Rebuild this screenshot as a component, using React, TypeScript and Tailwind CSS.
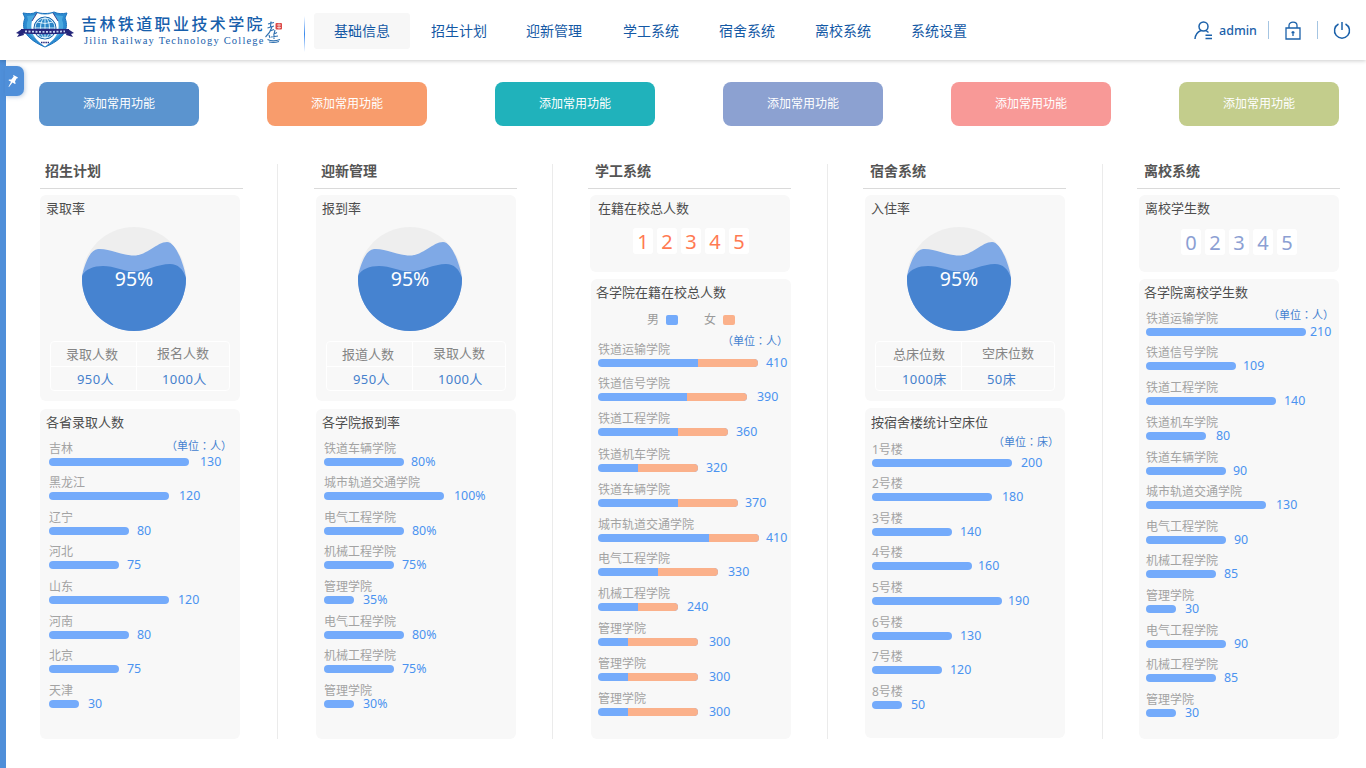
import React from "react";

type Row = { label: string; value: string; w: number; gap: number; h: number; blue?: number };

const rows = (list: [string, string, number, number, number, number?][], left: number, last = 34): Row[] =>
  list.map(([label, value, w, x, top, blue], i) => ({
    label,
    value,
    w,
    gap: x - left - w,
    h: i + 1 < list.length ? list[i + 1][4] - top : last,
    blue,
  }));

const provinces = rows([
  ["吉林", "130", 140, 200, 458], ["黑龙江", "120", 120, 179, 492], ["辽宁", "80", 80, 137, 527],
  ["河北", "75", 70, 127, 561], ["山东", "120", 120, 178, 596], ["河南", "80", 80, 137, 631],
  ["北京", "75", 70, 127, 665], ["天津", "30", 30, 88, 700],
], 49);

const arrivals = rows([
  ["铁道车辆学院", "80%", 80, 411, 458], ["城市轨道交通学院", "100%", 120, 454, 492], ["电气工程学院", "80%", 80, 412, 527],
  ["机械工程学院", "75%", 70, 402, 561], ["管理学院", "35%", 30, 363, 596], ["电气工程学院", "80%", 80, 412, 631],
  ["机械工程学院", "75%", 70, 402, 665], ["管理学院", "30%", 30, 363, 700],
], 324);

const students = rows([
  ["铁道运输学院", "410", 160, 766, 359, 100], ["铁道信号学院", "390", 149, 757, 393, 89], ["铁道工程学院", "360", 130, 736, 428, 80],
  ["铁道机车学院", "320", 100, 706, 464, 40], ["铁道车辆学院", "370", 140, 745, 499, 80], ["城市轨道交通学院", "410", 161, 766, 534, 111],
  ["电气工程学院", "330", 120, 728, 568, 60], ["机械工程学院", "240", 80, 687, 603, 40], ["管理学院", "300", 100, 709, 638, 30],
  ["管理学院", "300", 100, 709, 673, 30], ["管理学院", "300", 100, 709, 708, 30],
], 598, 30);

const buildings = rows([
  ["1号楼", "200", 140, 1021, 459], ["2号楼", "180", 120, 1002, 493], ["3号楼", "140", 80, 960, 528],
  ["4号楼", "160", 100, 978, 562], ["5号楼", "190", 130, 1008, 597], ["6号楼", "130", 80, 960, 632],
  ["7号楼", "120", 70, 950, 666], ["8号楼", "50", 30, 911, 701],
], 872);

const leavers = rows([
  ["铁道运输学院", "210", 160, 1310, 328], ["铁道信号学院", "109", 90, 1243, 362], ["铁道工程学院", "140", 130, 1284, 397],
  ["铁道机车学院", "80", 60, 1216, 432], ["铁道车辆学院", "90", 80, 1233, 467], ["城市轨道交通学院", "130", 120, 1276, 501],
  ["电气工程学院", "90", 80, 1234, 536], ["机械工程学院", "85", 70, 1224, 570], ["管理学院", "30", 30, 1185, 605],
  ["电气工程学院", "90", 80, 1234, 640], ["机械工程学院", "85", 70, 1224, 674], ["管理学院", "30", 30, 1185, 709],
], 1146, 30);

const navItems = ["基础信息", "招生计划", "迎新管理", "学工系统", "宿舍系统", "离校系统", "系统设置"];
const quick = ["bg-[#5b94cf]", "bg-[#f89c6c]", "bg-[#20b2bb]", "bg-[#8ca1d1]", "bg-[#f89997]", "bg-[#c3cd8c]"];

function Bars({ data }: { data: Row[] }) {
  return (
    <div className="flex flex-col">
      {data.map((r, i) => (
        <div key={i} style={{ height: r.h }}>
          <div className="h-4 text-[12px] leading-[18px] text-[#a3a3a3]">{r.label}</div>
          <div className="flex h-3 items-center whitespace-nowrap">
            <div className="flex h-2 shrink-0 overflow-hidden rounded-full bg-[#74abfb]" style={{ width: r.w }}>
              {r.blue !== undefined && <div className="h-2 flex-1 bg-[#fbb18b]" style={{ marginLeft: r.blue }} />}
            </div>
            <span className="text-[12.4px] leading-3 text-[#4b93f0]" style={{ marginLeft: r.gap }}>{r.value}</span>
          </div>
        </div>
      ))}
    </div>
  );
}

function Unit({ unit, className }: { unit: string; className: string }) {
  return (
    <span className={`absolute whitespace-nowrap font-['Noto_Sans_CJK_TC',sans-serif] text-[11px] leading-[14px] text-[#4381d0] ${className}`}>
      （单位：{unit}）
    </span>
  );
}

function Wave() {
  return (
    <svg className="mx-auto block" width="104" height="104" viewBox="0 0 104 104">
      <defs>
        <clipPath id="disc"><circle cx="52" cy="52" r="52" /></clipPath>
      </defs>
      <g clipPath="url(#disc)">
        <rect width="104" height="104" fill="#eeeeee" />
        <path d="M0 48C4 34 8 23 16 22C26 21 40 28.500 52 28.500C65 28.500 75 15 85 15C94 15 102 38 104 50V104H0Z" fill="#7fa9e6" />
        <path d="M0 49C3 42 12 39 21 39C32 39 42 44.500 52 44.500C63 44.500 76 37 88 37C96 37 101 42 104 51V104H0Z" fill="#4683d0" />
      </g>
      <text x="52" y="59" textAnchor="middle" fontSize="19.500" fill="#fff">95%</text>
    </svg>
  );
}

function RateCard({ title, cells, values, wide }: { title: string; cells: [string, string]; values: [string, string]; wide?: boolean }) {
  return (
    <section className="h-[206px] w-[200px] rounded-md bg-[#f8f8f8] pt-[3px]">
      <h3 className="mb-[9px] pl-[6px] text-[13px] leading-5 text-[#4d4d4d]">{title}</h3>
      <div className="pr-3"><Wave /></div>
      <div className="ml-[10px] mt-[10px] grid h-[50px] w-[180px] grid-cols-[86px_1fr] grid-rows-[25px_1fr] overflow-hidden rounded-[4px] border border-white text-[13px] leading-6">
        <div className={`border-b border-r border-white text-[#858585] ${wide ? "pl-[17px]" : "pl-[15px]"}`}>{cells[0]}</div>
        <div className="border-b border-white pl-5 leading-[23px] text-[#858585]">{cells[1]}</div>
        <div className="border-r border-white pl-[26px] tracking-[0.4px] text-[#4580cc]">{values[0]}</div>
        <div className="pl-[25px] tracking-[0.4px] text-[#4580cc]">{values[1]}</div>
      </div>
    </section>
  );
}

function CountCard({ title, digits, color, offset }: { title: string; digits: string; color: string; offset: string }) {
  return (
    <section className="h-[77px] w-[200px] rounded-md bg-[#f8f8f8] pt-[3px]">
      <h3 className={`${offset} text-[13px] leading-5 text-[#4d4d4d]`}>{title}</h3>
      <div className={`flex gap-1 ${color}`}>
        {digits.split("").map((d, i) => (
          <span key={i} className="h-[26px] w-5 rounded-[3px] bg-white text-center text-[20px] leading-[27px]">{d}</span>
        ))}
      </div>
    </section>
  );
}

function Title({ children, className }: { children: React.ReactNode; className: string }) {
  return <h2 className={`mb-[6px] h-[25px] w-[203px] border-b border-[#dadada] text-[14px] font-bold leading-[13px] text-[#555] ${className}`}>{children}</h2>;
}

function Crest() {
  return (
    <svg width="60" height="38" viewBox="0 0 60 38">
      <path d="M8 2C14 3 18 3 21 1C26 3 34 3 39 1C43 3 47 3 52 2L50 7C55 19 47 29 30 36C13 29 5 19 10 7Z" fill="#2c8bd0" stroke="#1b72bd" />
      <path d="M12 5C16 5 19 4 21 4L22 9C17 13 17 23 21 28C12 23 10 15 13 9Z" fill="#49a8df" />
      <path d="M48 5C44 5 41 4 39 4L38 9C43 13 43 23 39 28C48 23 50 15 47 9Z" fill="#49a8df" />
      <path d="M22 2L17 10C14 23 22 30 30 35.500C38 30 46 23 43 10L38 2Q30 5 22 2Z" fill="#fff" />
      <path d="M22 2L17 10M38 2L43 10" stroke="#25267b" strokeWidth=".8" />
      <circle cx="30" cy="17" r="11" fill="#2b86c8" stroke="#1763a9" />
      <g fill="none" stroke="#e7f7ff" strokeWidth=".9">
        <circle cx="30" cy="17" r="10" />
        <ellipse cx="30" cy="17" rx="4.500" ry="10" />
        <path d="M30 7V27M20 17H40M22 11Q30 14 38 11M22 24Q30 20 38 24" />
      </g>
      <path d="M6 18Q30 17.500 54 18L54 22.500Q30 24 6 22.500Z" fill="#25267b" />
      <path d="M7 18L1 22L4 23L2 26L9 24ZM53 18L59 22L56 23L58 26L51 24Z" fill="#25267b" />
      <path d="M10 20.300Q30 21.500 50 20.300" fill="none" stroke="#c9d5f3" strokeWidth="1.800" strokeDasharray="2 1.500" />
      <path d="M26 31.500H34" stroke="#25267b" strokeWidth="1.500" strokeDasharray="1.500 .7" />
    </svg>
  );
}

export default function App() {
  return (
    <div className="flex h-[768px] w-[1366px] flex-col overflow-hidden bg-white font-['Noto_Sans','Noto_Sans_CJK_SC',sans-serif]">
      <header className="relative z-10 flex h-[60px] shrink-0 bg-white shadow-[0_1px_4px_rgba(0,0,0,0.2)]">
        <div className="flex w-[304px] pl-[15px] pt-[11px]">
          <Crest />
          <div className="ml-[6px] mt-[3px] w-[183px] shrink-0 whitespace-nowrap text-[#1860ac]">
            <div className="h-[21px] text-[16px] font-medium leading-[21px] tracking-[2.4px]">吉林铁道职业技术学院</div>
            <div className="ml-[3px] font-['Liberation_Serif',serif] text-[10.5px] leading-[12px] tracking-[1.18px]">Jilin Railway Technology College</div>
          </div>
          <svg className="mt-[8px] shrink-0" width="19" height="25" viewBox="0 0 19 25" fill="none" stroke="#2f70b0" strokeWidth="1.100">
            <path d="M4 5L10 3.500M7 2.500L6.500 8M3.500 9L10 7M8 8Q6 14 1.500 18M6 12L10 10.500M11 11L10 15L13 13.500M5 16L6 19M10 15V20M7 18L14 17M3.500 20.500Q9 23 16 20.500M5 23Q10 24 15 22.500" />
            <rect x="11.500" y="4" width="6.500" height="6.500" rx="1" fill="#dc4a48" stroke="none" />
            <path d="M13 6H17M13 8.500H17M15 4.500V10" stroke="#fff" strokeWidth=".6" />
          </svg>
        </div>
        <div className="mt-4 h-9 w-px bg-gradient-to-b from-white via-[#3689ec] to-white" />
        <nav className="ml-[9px] mt-[13px] flex h-9">
          {navItems.map((n, i) => (
            <a key={n} className={`w-24 rounded-[3px] text-center text-[14px] leading-9 text-[#1459a5] ${i === 0 ? "bg-[#f7f7f7]" : i === 2 ? "" : "pl-[2px]"}`}>{n}</a>
          ))}
        </nav>
        <div className="ml-auto flex items-center pr-[15px] text-[#1b61aa]">
          <svg width="19" height="19" viewBox="0 0 19 19" fill="none" stroke="currentColor" strokeWidth="1.500">
            <circle cx="9.500" cy="5.500" r="4.500" />
            <path d="M1 18C1.300 13.500 3.500 11 7 9.500M12 9.500L14.500 11.500M11.500 14.200H18M11.500 17.500H18" />
          </svg>
          <span className="ml-[6px] mt-[3px] w-[37px] text-[12.5px] font-medium">admin</span>
          <i className="ml-3 h-[18px] w-px bg-[#a5c5e2]" />
          <svg className="ml-4" width="16" height="19" viewBox="0 0 16 19" fill="none" stroke="currentColor" strokeWidth="1.300">
            <path d="M1 7H15V18H1ZM4 7V4.500C4 0 12 0 12 4.500V7M8 10V15M6.500 11.500H9.500" />
          </svg>
          <i className="ml-4 h-[18px] w-px bg-[#a5c5e2]" />
          <svg className="ml-[15px]" width="18" height="19" viewBox="0 0 18 19" fill="none" stroke="currentColor" strokeWidth="1.500">
            <path d="M5.500 3A7.500 7.500 0 1 0 12.500 3M9 1V9" />
          </svg>
        </div>
      </header>
      <div className="flex min-h-0 flex-1">
        <aside className="relative w-[6px] shrink-0 bg-[#4f8fd9]">
          <div className="absolute left-[5px] top-[6px] flex h-[30px] w-[19px] items-center rounded-r-[7px] bg-[#4f8fd9] pl-[3px] shadow-[1px_1px_4px_rgba(60,110,170,0.35)]">
            <svg width="10" height="12" viewBox="0 0 10 12" fill="#fff">
              <path d="M5.500 0L10 2.500L9.200 3.500L8.500 3.400L7 6.500L7.700 8.500L7 9L4.500 7.600L1 12L.5 11.700L3 6.800L.5 5.300L1 4.600L3.300 4.500L5.700 1.500L5.100.8Z" />
            </svg>
          </div>
        </aside>
        <main className="min-w-0 flex-1">
          <div className="ml-[33px] mt-[22px] flex gap-[68px]">
            {quick.map((c) => (
              <button key={c} className={`h-11 w-40 shrink-0 rounded-[8px] text-[12px] text-white ${c}`}>添加常用功能</button>
            ))}
          </div>
          <div className="ml-[34px] mt-[38px] flex h-[575px]">
            <div className="w-[238px] shrink-0 border-r border-[#ebebeb]">
              <Title className="pl-[5px]">招生计划</Title>
              <RateCard title="录取率" cells={["录取人数", "报名人数"]} values={["950人", "1000人"]} />
              <section className="relative mt-2 h-[330px] w-[200px] rounded-md bg-[#f8f8f8] pl-[9px] pt-[3px]">
                <h3 className="-ml-[3px] mb-[8px] text-[13px] leading-5 text-[#4d4d4d]">各省录取人数</h3>
                <Unit unit="人" className="left-[126px] top-[29px]" />
                <Bars data={provinces} />
              </section>
            </div>
            <div className="w-[275px] shrink-0 border-r border-[#ebebeb] pl-[38px]">
              <Title className="-ml-[2px] pl-[7px]">迎新管理</Title>
              <RateCard title="报到率" cells={["报道人数", "录取人数"]} values={["950人", "1000人"]} />
              <section className="mt-2 h-[330px] w-[200px] rounded-md bg-[#f8f8f8] pl-2 pt-[3px]">
                <h3 className="-ml-[2px] mb-[8px] text-[13px] leading-5 text-[#4d4d4d]">各学院报到率</h3>
                <Bars data={arrivals} />
              </section>
            </div>
            <div className="w-[275px] shrink-0 border-r border-[#ebebeb] pl-[37px]">
              <Title className="-ml-[2px] pl-[7px]">学工系统</Title>
              <CountCard title="在籍在校总人数" digits="12345" color="pl-[43px] text-[#ff7a52]" offset="mb-[10px] pl-2" />
              <section className="relative ml-px mt-[7px] h-[460px] w-[200px] rounded-md bg-[#f8f8f8] pl-[7px] pt-[3px]">
                <h3 className="-ml-[2px] text-[13px] leading-5 text-[#4d4d4d]">各学院在籍在校总人数</h3>
                <div className="mb-3 ml-[49px] mt-[9px] flex h-[18px] items-center text-[12px] text-[#9a9a9a]">
                  男<i className="-mt-px ml-[7px] mr-[26px] h-[10px] w-3 rounded-[2px] bg-[#74abfb]" />女<i className="ml-[7px] h-[10px] w-3 rounded-[2px] bg-[#fbb18b]" />
                </div>
                <Unit unit="人" className="left-[131px] top-[54px]" />
                <Bars data={students} />
              </section>
            </div>
            <div className="w-[275px] shrink-0 border-r border-[#ebebeb] pl-[37px]">
              <Title className="-ml-[2px] pl-[7px]">宿舍系统</Title>
              <RateCard title="入住率" cells={["总床位数", "空床位数"]} values={["1000床", "50床"]} wide />
              <section className="relative mt-[7px] h-[330px] w-[200px] rounded-md bg-[#f8f8f8] pl-[7px] pt-[4px]">
                <h3 className="-ml-px mb-[9px] text-[13px] leading-5 text-[#4d4d4d]">按宿舍楼统计空床位</h3>
                <Unit unit="床" className="left-[128px] top-[26px]" />
                <Bars data={buildings} />
              </section>
            </div>
            <div className="shrink-0 pl-[36px]">
              <Title className="-ml-[2px] pl-[7px]">离校系统</Title>
              <CountCard title="离校学生数" digits="02345" color="pl-[42px] text-[#8c9fd3]" offset="mb-[11px] pl-[6px]" />
              <section className="relative mt-[7px] h-[460px] w-[200px] rounded-md bg-[#f8f8f8] pl-[7px] pt-[3px]">
                <h3 className="-ml-[2px] mb-[8px] text-[13px] leading-5 text-[#4d4d4d]">各学院离校学生数</h3>
                <Unit unit="人" className="left-[129px] top-[28px]" />
                <Bars data={leavers} />
              </section>
            </div>
          </div>
        </main>
      </div>
    </div>
  );
}
